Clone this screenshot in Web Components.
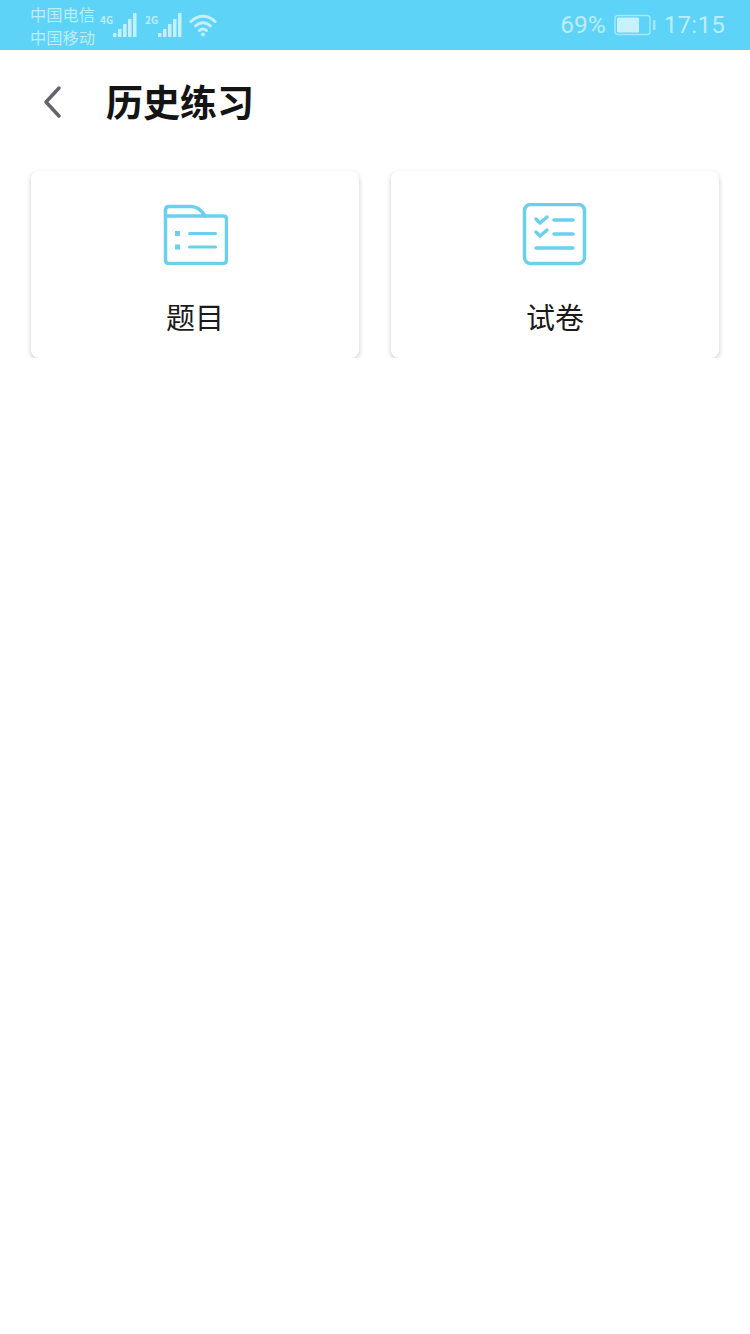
<!DOCTYPE html>
<html lang="zh">
<head>
<meta charset="utf-8">
<title>历史练习</title>
<style>
  html, body { margin: 0; background: #fff; }
  body { font-family: "Noto Sans CJK SC", "Noto Sans", sans-serif; }
</style>
</head>
<body>
<status-bar></status-bar>
<nav-header>历史练习</nav-header>
<card-grid>
  <entry-card>
    <svg slot="icon" width="66" height="62" viewBox="162 203 66 62" fill="none" stroke="#69d1ee" stroke-width="3.500" stroke-linecap="round" stroke-linejoin="round">
      <path d="M169 206.500H191C197 206.500 201 209.500 205 216H223.500Q226.500 216 226.500 219V260Q226.500 263.500 223 263.500H169Q165.500 263.500 165.500 260V210Q165.500 206.500 169 206.500Z"/>
      <path d="M165.500 216H205"/>
      <path d="M189.500 233.500H215.500M189.500 247H215.500" stroke-width="3"/>
      <rect x="175" y="231" width="5" height="5" fill="#69d1ee" stroke="none"/>
      <rect x="175" y="244.500" width="5" height="5" fill="#69d1ee" stroke="none"/>
    </svg>
    题目
  </entry-card>
  <entry-card>
    <svg slot="icon" width="66" height="64" viewBox="522 203 66 64" fill="none" stroke="#69d1ee" stroke-width="3.500" stroke-linecap="round" stroke-linejoin="round">
      <rect x="524.500" y="204.500" width="60" height="59" rx="6"/>
      <path d="M536 219L540 223L547 217M536 232L540 236L547 230"/>
      <path d="M554 220H573M554 234H573M536 248H573"/>
    </svg>
    试卷
  </entry-card>
</card-grid>

<script>
// Top system bar: carriers and signal on the left, battery and clock on the right.
class StatusBar extends HTMLElement {
  constructor() {
    super();
    this.attachShadow({ mode: "open" });
  }

  connectedCallback() {
    const bars = (h) => [0, 1, 2, 3, 4].map((i) =>
      `<rect x="${i * 5}" y="${24 - h[i]}" width="3.5" height="${h[i]}" rx="0.5"/>`).join("");

    this.shadowRoot.innerHTML = `
      <style>
        :host {
          display: flex;
          align-items: center;
          justify-content: space-between;
          height: 50px;
          padding: 0 25px 0 30px;
          background: #5dd3f7;
          color: rgba(255, 255, 255, 0.6);
          box-sizing: border-box;
          font-family: "Noto Sans CJK SC", "Noto Sans", sans-serif;
        }
        .left, .right, .signal { display: flex; align-items: center; }
        .carriers { font-size: 16.3px; line-height: 23px; width: 70px; margin-top: 1px; }
        .signal { position: relative; align-items: flex-end; height: 24px; }
        .net { font-size: 10px; font-weight: 700; line-height: 10px; width: 13px; align-self: flex-start; margin-top: 2px; }
        svg { display: block; }
        .gap { margin-right: 8px; }
        .gap.last { margin-right: 6px; }
        .pct { font: 24.5px/1 Roboto, sans-serif; margin-right: 8px; }
        .time { font: 24px/1 Roboto, sans-serif; margin-left: 8px; letter-spacing: 0.3px; }
      </style>
      <div class="left">
        <div class="carriers">中国电信<br>中国移动</div>
        <div class="signal gap">
          <span class="net">4G</span>
          <svg width="24" height="24" fill="#c4effb">${bars([4, 8, 13, 18, 24])}</svg>
        </div>
        <div class="signal gap last">
          <span class="net">2G</span>
          <svg width="25" height="24" fill="#c4effb">${bars([4, 8, 13, 18, 24])}</svg>
        </div>
        <svg width="28" height="24" viewBox="0 0 28 24" fill="none" stroke="#c4effb" stroke-width="3" stroke-linecap="round">
          <path d="M2 8.500C9 1.500 19 1.500 26 8.500"/>
          <path d="M6.500 13C11 8.500 17 8.500 21.500 13"/>
          <path d="M10.500 17.500C12.500 15.500 15.500 15.500 17.500 17.500"/>
          <circle cx="14" cy="21.500" r="2" fill="#c4effb" stroke="none"/>
        </svg>
      </div>
      <div class="right">
        <span class="pct">69%</span>
        <svg width="42" height="22" viewBox="0 0 42 22" fill="none">
          <rect x="1" y="1.500" width="35" height="19" rx="3" stroke="#a5e8fb" stroke-width="1.500"/>
          <rect x="3" y="3.500" width="22" height="15" rx="1" fill="#c9f1fc"/>
          <rect x="39" y="6" width="2.500" height="10" rx="1" fill="#a5e8fb"/>
        </svg>
        <span class="time">17:15</span>
      </div>
    `;
  }
}

// Page header with a back chevron and the slotted title.
class NavHeader extends HTMLElement {
  constructor() {
    super();
    this.attachShadow({ mode: "open" });
  }

  connectedCallback() {
    this.shadowRoot.innerHTML = `
      <style>
        :host {
          display: flex;
          align-items: center;
          box-sizing: border-box;
          height: 107px;
          padding: 0 0 4px 42px;
          color: #141414;
          font-size: 37px;
          font-weight: 700;
          line-height: 1;
        }
        svg { display: block; margin-right: 43px; }
      </style>
      <svg width="21" height="36" viewBox="0 0 21 36" fill="none" stroke="#63636b" stroke-width="3.500" stroke-linecap="round" stroke-linejoin="round">
        <path d="M17 4L4 18L17 32"/>
      </svg>
      <slot></slot>
    `;
  }
}

// Two equal columns holding the entry cards.
class CardGrid extends HTMLElement {
  constructor() {
    super();
    this.attachShadow({ mode: "open" });
  }

  connectedCallback() {
    this.shadowRoot.innerHTML = `
      <style>
        :host {
          display: grid;
          grid-template-columns: 328px 328px;
          gap: 32px;
          padding: 14px 31px 0;
        }
      </style>
      <slot></slot>
    `;
  }
}

// Card with an icon on top and a slotted label below it.
class EntryCard extends HTMLElement {
  constructor() {
    super();
    this.attachShadow({ mode: "open" });
  }

  connectedCallback() {
    this.shadowRoot.innerHTML = `
      <style>
        :host {
          display: flex;
          flex-direction: column;
          align-items: center;
          box-sizing: border-box;
          height: 187px;
          padding-top: 32px;
          background: #fff;
          border-radius: 8px;
          box-shadow: 0 2px 5px rgba(0, 0, 0, 0.22);
          color: #1a1a1a;
          font-size: 29px;
          line-height: 40px;
        }
        .icon { height: 62px; margin-bottom: 31px; }
        ::slotted(svg) { display: block; }
      </style>
      <div class="icon"><slot name="icon"></slot></div>
      <slot></slot>
    `;
  }
}

customElements.define("status-bar", StatusBar);
customElements.define("nav-header", NavHeader);
customElements.define("card-grid", CardGrid);
customElements.define("entry-card", EntryCard);
</script>
</body>
</html>
